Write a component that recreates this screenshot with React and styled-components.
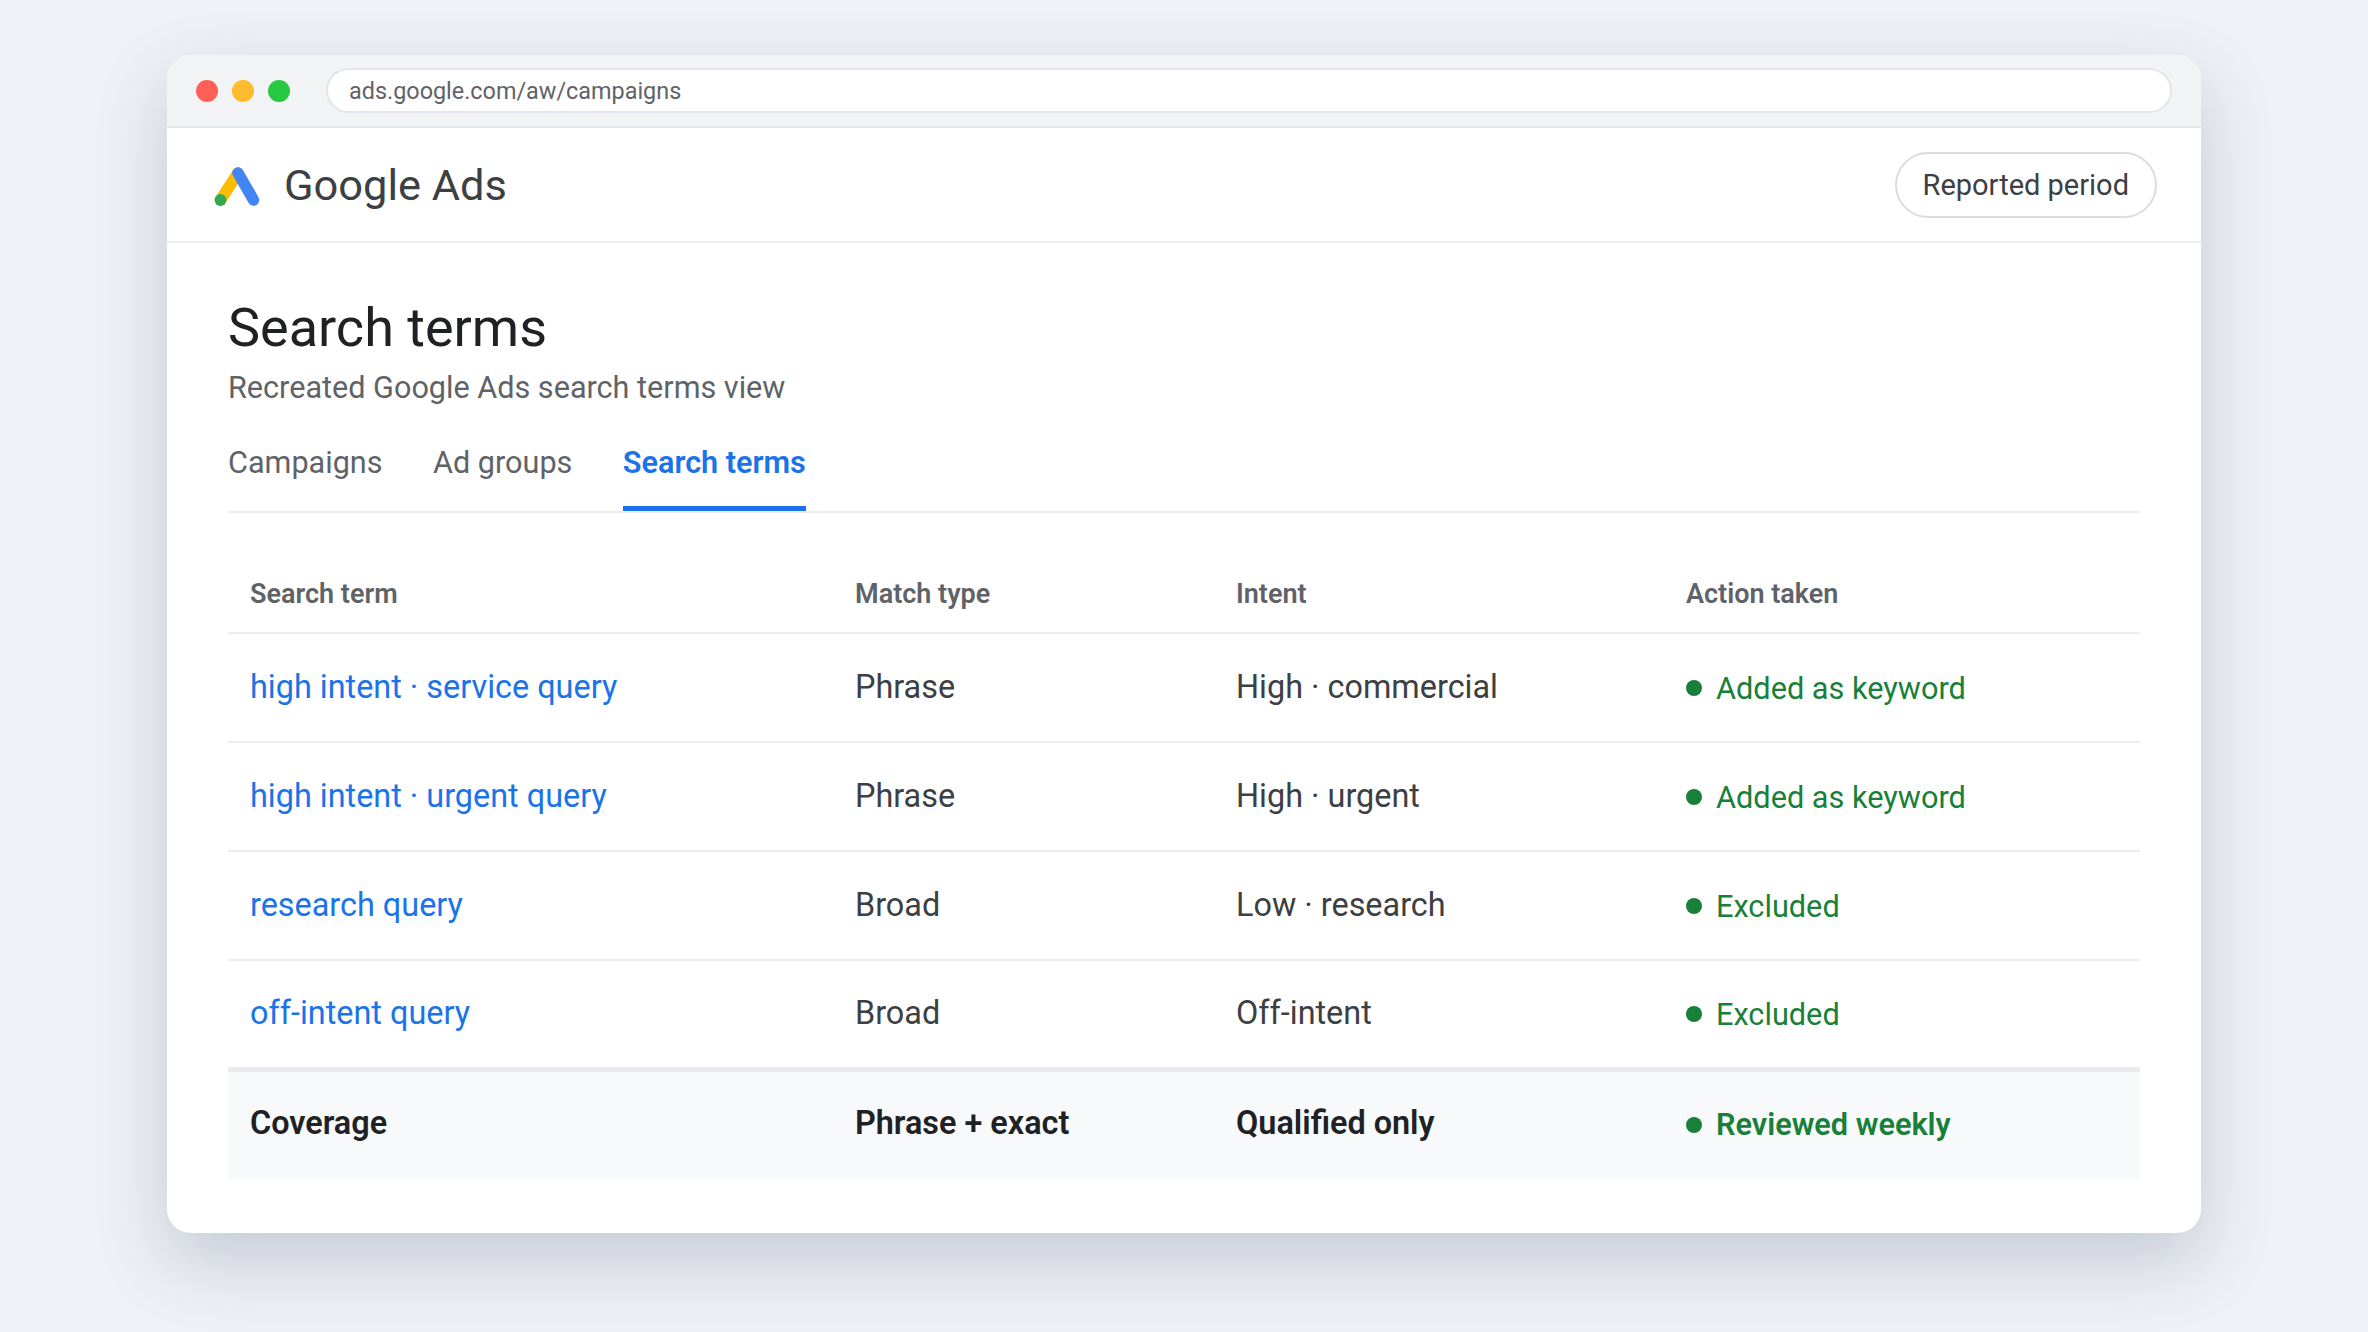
import React from 'react'
import styled, { createGlobalStyle } from 'styled-components'

const Global = createGlobalStyle`
  html, body { margin: 0; padding: 0; }
  body { background: #eef1f6; font-family: Roboto, "Liberation Sans", sans-serif; }
`

const Page = styled.div`
  width: 2368px;
  height: 1332px;
  padding: 55px 167px 0;
  box-sizing: border-box;
  overflow: hidden;
`

const Window = styled.div`
  height: 1178px;
  background: #fff;
  border-radius: 24px;
  box-shadow: 0 28px 70px rgba(60, 64, 90, 0.22);
  overflow: hidden;
`

const Chrome = styled.div`
  height: 71px;
  background: #f1f3f5;
  border-bottom: 2px solid #e3e5ea;
  display: flex;
  align-items: center;
  padding: 0 29px;
  gap: 14px;
`

const Dot = styled.span`
  width: 22px;
  height: 22px;
  border-radius: 50%;
  background: ${p => p.$color};
  flex: none;
`

const UrlBar = styled.div`
  flex: 1;
  height: 45px;
  margin-left: 22px;
  box-sizing: border-box;
  background: #fff;
  border: 2px solid #e3e5ea;
  border-radius: 23px;
  padding: 0 21px;
  display: flex;
  align-items: center;
  font-size: 23.4px;
  color: #5f6368;
`

const AppHeader = styled.div`
  height: 113px;
  border-bottom: 2px solid #ebecef;
  display: flex;
  align-items: center;
  justify-content: space-between;
  padding: 0 44px 0 45px;
`

const Brand = styled.div`
  display: flex;
  align-items: center;
  gap: 24px;
  padding-top: 1px;
  font-size: 43.4px;
  color: #3c4043;
`

const PeriodButton = styled.div`
  height: 66px;
  box-sizing: border-box;
  padding: 0 26px;
  border: 2px solid #dadce0;
  border-radius: 33px;
  display: flex;
  align-items: center;
  font-size: 29px;
  color: #3c4043;
`

const Content = styled.div`
  padding: 53px 61px 0;
`

const Title = styled.h1`
  margin: 0;
  font-size: 54px;
  line-height: 64px;
  font-weight: 400;
  color: #202124;
`

const Subtitle = styled.p`
  margin: 8px 0 0;
  font-size: 30.6px;
  line-height: 40px;
  color: #5f6368;
`

const Tabs = styled.div`
  display: flex;
  gap: 50.5px;
  margin-top: 21px;
  border-bottom: 2px solid #ebecef;
`

const Tab = styled.div`
  font-size: 30.6px;
  line-height: 40px;
  padding: 14px 0 28px;
  font-weight: ${p => (p.$active ? 600 : 400)};
  color: ${p => (p.$active ? '#1a73e8' : '#5f6368')};
  box-shadow: ${p => (p.$active ? 'inset 0 -5px 0 #1a73e8' : 'none')};
`

const Table = styled.div`
  margin-top: 42px;
`

const Row = styled.div`
  display: grid;
  grid-template-columns: 605px 381px 450px 1fr;
  align-items: center;
  padding: 0 21px 2px 22px;
  height: 109px;
  border-bottom: 2px solid #ebecef;
  box-sizing: border-box;
  font-size: 32.4px;
  color: #3c4043;

  &:nth-child(5) {
    height: 107.5px;
  }

  ${p => p.$total && `
    height: 110px;
    padding-bottom: 4px;
    border-bottom: 0;
    border-top: 3px solid #e8eaed;
    background: #f8f9fa;
    font-weight: 600;
    color: #202124;
  `}
`

const HeadRow = styled(Row)`
  height: 79px;
  padding-bottom: 0;
  font-size: 27px;
  font-weight: 600;
  color: #5f6368;
`

const TermLink = styled.a`
  color: #1a73e8;
`

const Status = styled.span`
  display: flex;
  align-items: center;
  gap: 14px;
  padding-top: 3px;
  color: #188038;
  font-size: 30.7px;
`

const StatusDot = styled.i`
  width: 16px;
  height: 16px;
  border-radius: 50%;
  background: #188038;
  flex: none;
`

const AdsLogo = () => (
  <svg width="48" height="44" viewBox="0 0 48 44" fill="none" strokeLinecap="round" strokeWidth="11.5">
    <path d="M8.5 37 L26 10" stroke="#fbbc04" />
    <path d="M26 10 L41.5 37" stroke="#4285f4" />
    <circle cx="8.5" cy="37" r="5.9" fill="#34a853" />
  </svg>
)

const rows = [
  ['high intent · service query', 'Phrase', 'High · commercial', 'Added as keyword'],
  ['high intent · urgent query', 'Phrase', 'High · urgent', 'Added as keyword'],
  ['research query', 'Broad', 'Low · research', 'Excluded'],
  ['off-intent query', 'Broad', 'Off-intent', 'Excluded'],
]

export default function App() {
  return (
    <Page>
      <Global />
      <Window>
        <Chrome>
          <Dot $color="#ff5f57" />
          <Dot $color="#febc2e" />
          <Dot $color="#28c840" />
          <UrlBar>ads.google.com/aw/campaigns</UrlBar>
        </Chrome>
        <AppHeader>
          <Brand>
            <AdsLogo />
            Google Ads
          </Brand>
          <PeriodButton>Reported period</PeriodButton>
        </AppHeader>
        <Content>
          <Title>Search terms</Title>
          <Subtitle>Recreated Google Ads search terms view</Subtitle>
          <Tabs>
            <Tab>Campaigns</Tab>
            <Tab>Ad groups</Tab>
            <Tab $active>Search terms</Tab>
          </Tabs>
          <Table>
            <HeadRow>
              <span>Search term</span>
              <span>Match type</span>
              <span>Intent</span>
              <span>Action taken</span>
            </HeadRow>
            {rows.map(r => (
              <Row key={r[0]}>
                <TermLink>{r[0]}</TermLink>
                <span>{r[1]}</span>
                <span>{r[2]}</span>
                <Status><StatusDot />{r[3]}</Status>
              </Row>
            ))}
            <Row $total>
              <span>Coverage</span>
              <span>Phrase + exact</span>
              <span>Qualified only</span>
              <Status><StatusDot />Reviewed weekly</Status>
            </Row>
          </Table>
        </Content>
      </Window>
    </Page>
  )
}
